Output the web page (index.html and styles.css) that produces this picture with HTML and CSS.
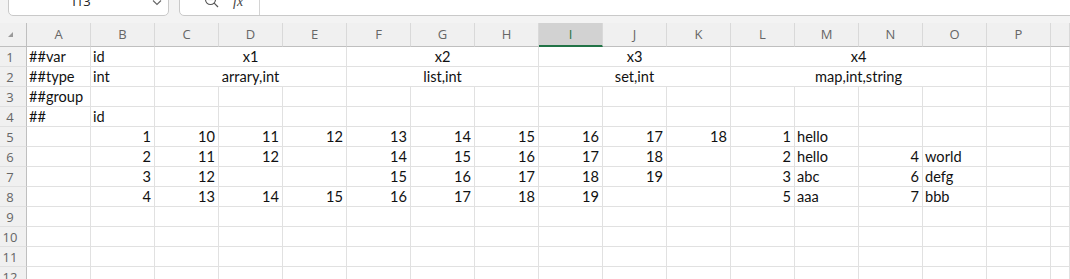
FILE: index.html
```html
<!DOCTYPE html>
<html lang="en">
<head>
    <meta charset="UTF-8">
    <meta name="viewport" content="width=device-width, initial-scale=1.0">
    <title>Sheet1</title>
    <link rel="stylesheet" href="styles.css">
</head>
<body>
    <div class="formula-bar">
        <div class="name-box">
            <span>I13</span>
            <svg class="chevron" width="10" height="6" viewBox="0 0 10 6">
                <polyline points="1,0.5 5,4.5 9,0.5" fill="none" stroke="#666" stroke-width="1.1"/>
            </svg>
        </div>
        <div class="formula-box">
            <div class="formula-icons">
                <svg class="zoom-icon" width="16" height="16" viewBox="0 0 16 16">
                    <circle cx="6.5" cy="6.5" r="5" fill="none" stroke="#555" stroke-width="1.1"/>
                    <line x1="4" y1="6.5" x2="9" y2="6.5" stroke="#555" stroke-width="1.1"/>
                    <line x1="10.2" y1="10.2" x2="14" y2="14" stroke="#555" stroke-width="1.2"/>
                </svg>
                <span class="fx">fx</span>
            </div>
            <div class="formula-input"></div>
        </div>
    </div>

    <div class="sheet" id="sheet"></div>

    <script>
        // last column (Q) is only partly on screen, so its letter is not shown
        const columns = 'ABCDEFGHIJKLMNOP'.split('').concat(['']);
        const selectedCol = 'I';

        // [text, span, align]
        const rows = [
            [['##var'], ['id'], ['x1', 3, 'c'], ['x2', 3, 'c'], ['x3', 3, 'c'], ['x4', 4, 'c'], [''], ['']],
            [['##type'], ['int'], ['arrary,int', 3, 'c'], ['list,int', 3, 'c'], ['set,int', 3, 'c'], ['map,int,string', 4, 'c'], [''], ['']],
            ['##group', '', '', '', '', '', '', '', '', '', '', '', '', '', '', '', ''],
            ['##', 'id', '', '', '', '', '', '', '', '', '', '', '', '', '', '', ''],
            ['', 1, 10, 11, 12, 13, 14, 15, 16, 17, 18, 1, 'hello', '', '', '', ''],
            ['', 2, 11, 12, '', 14, 15, 16, 17, 18, '', 2, 'hello', 4, 'world', '', ''],
            ['', 3, 12, '', '', 15, 16, 17, 18, 19, '', 3, 'abc', 6, 'defg', '', ''],
            ['', 4, 13, 14, 15, 16, 17, 18, 19, '', '', 5, 'aaa', 7, 'bbb', '', ''],
            [], [], [], []
        ];

        function buildSheet() {
            const sheet = document.getElementById('sheet');
            let html = '<div class="corner"><span class="select-all"></span></div>';

            html += columns.map(col => {
                const cls = col === selectedCol ? 'col-head selected' : 'col-head';
                return `<div class="${cls}">${col}</div>`;
            }).join('');

            rows.forEach((row, i) => {
                html += `<div class="row-head">${i + 1}</div>`;
                let used = 0;
                row.forEach(cell => {
                    let text = cell, span = 1, align = '';
                    if (Array.isArray(cell)) {
                        [text, span = 1, align = ''] = cell;
                    }
                    if (typeof text === 'number') align = 'r';
                    const cls = 'cell' + (align === 'c' ? ' center' : align === 'r' ? ' num' : '');
                    const style = span > 1 ? ` style="grid-column: span ${span}"` : '';
                    html += `<div class="${cls}"${style}>${text}</div>`;
                    used += span;
                });
                for (; used < columns.length; used++) {
                    html += '<div class="cell"></div>';
                }
            });

            sheet.innerHTML = html;
        }

        buildSheet();
    </script>
</body>
</html>
```

FILE: styles.css
```css
body {
    margin: 0;
    background: #f3f3f3;
    font-family: Lato, "Liberation Sans", sans-serif;
    overflow: hidden;
}
.formula-bar {
    height: 16px;
    display: flex;
    align-items: flex-end;
    overflow: hidden;
    margin-bottom: 7px;
}
.name-box {
    width: 159px;
    height: 29px;
    margin-left: 8px;
    background: white;
    border: 1px solid #c9c9c9;
    border-radius: 5px;
    display: flex;
    align-items: center;
    justify-content: center;
    position: relative;
    font-family: "Open Sans", sans-serif;
    font-size: 13px;
    color: #222;
    flex-shrink: 0;
}
.name-box span {
    margin-right: 14px;
}
.chevron {
    position: absolute;
    right: 6px;
    top: 14px;
}
.formula-box {
    flex: 1;
    height: 29px;
    margin-left: 10px;
    margin-right: -10px;
    background: white;
    border: 1px solid #c9c9c9;
    border-radius: 5px;
    display: flex;
}
.formula-icons {
    width: 80px;
    border-right: 1px solid #d4d4d4;
    display: flex;
    align-items: flex-end;
    padding-bottom: 7px;
    box-sizing: border-box;
}
.zoom-icon {
    margin-left: 24px;
    margin-bottom: -1px;
}
.fx {
    margin-left: 13px;
    font-family: "Liberation Serif", serif;
    font-style: italic;
    font-size: 14px;
    line-height: 12px;
    color: #444;
}
.sheet {
    display: grid;
    grid-template-columns: 27px repeat(16, 64px) 1fr;
    grid-auto-rows: 20px;
    grid-template-rows: 24px;
    background: white;
}
.corner, .col-head, .row-head {
    background: #f0f0f0;
    color: #666;
    font-family: "Open Sans", sans-serif;
    font-size: 13px;
    box-sizing: border-box;
}
.corner {
    border-right: 1px solid #bfbfbf;
    border-bottom: 1px solid #bfbfbf;
    position: relative;
}
.select-all {
    position: absolute;
    left: 8px;
    top: 9px;
    width: 0;
    height: 0;
    border-left: 5px solid transparent;
    border-bottom: 5px solid #9a9a9a;
}
.col-head {
    border-right: 1px solid #d9d9d9;
    border-bottom: 1px solid #bfbfbf;
    text-align: center;
    line-height: 23px;
}
.col-head.selected {
    background: #d2d2d2;
    color: #217346;
    border-bottom: 2px solid #217346;
}
.row-head {
    border-right: 1px solid #bfbfbf;
    border-bottom: 1px solid #e0e0e0;
    text-align: center;
    padding-right: 6px;
    line-height: 20px;
}
.cell {
    border-right: 1px solid #e1e1e1;
    border-bottom: 1px solid #e1e1e1;
    box-sizing: border-box;
    padding: 0 2px;
    font-size: 14.6px;
    line-height: 20px;
    color: #111;
    white-space: nowrap;
    overflow: hidden;
}
.cell.center {
    text-align: center;
}
.cell.num {
    text-align: right;
    padding-right: 3px;
}
```
